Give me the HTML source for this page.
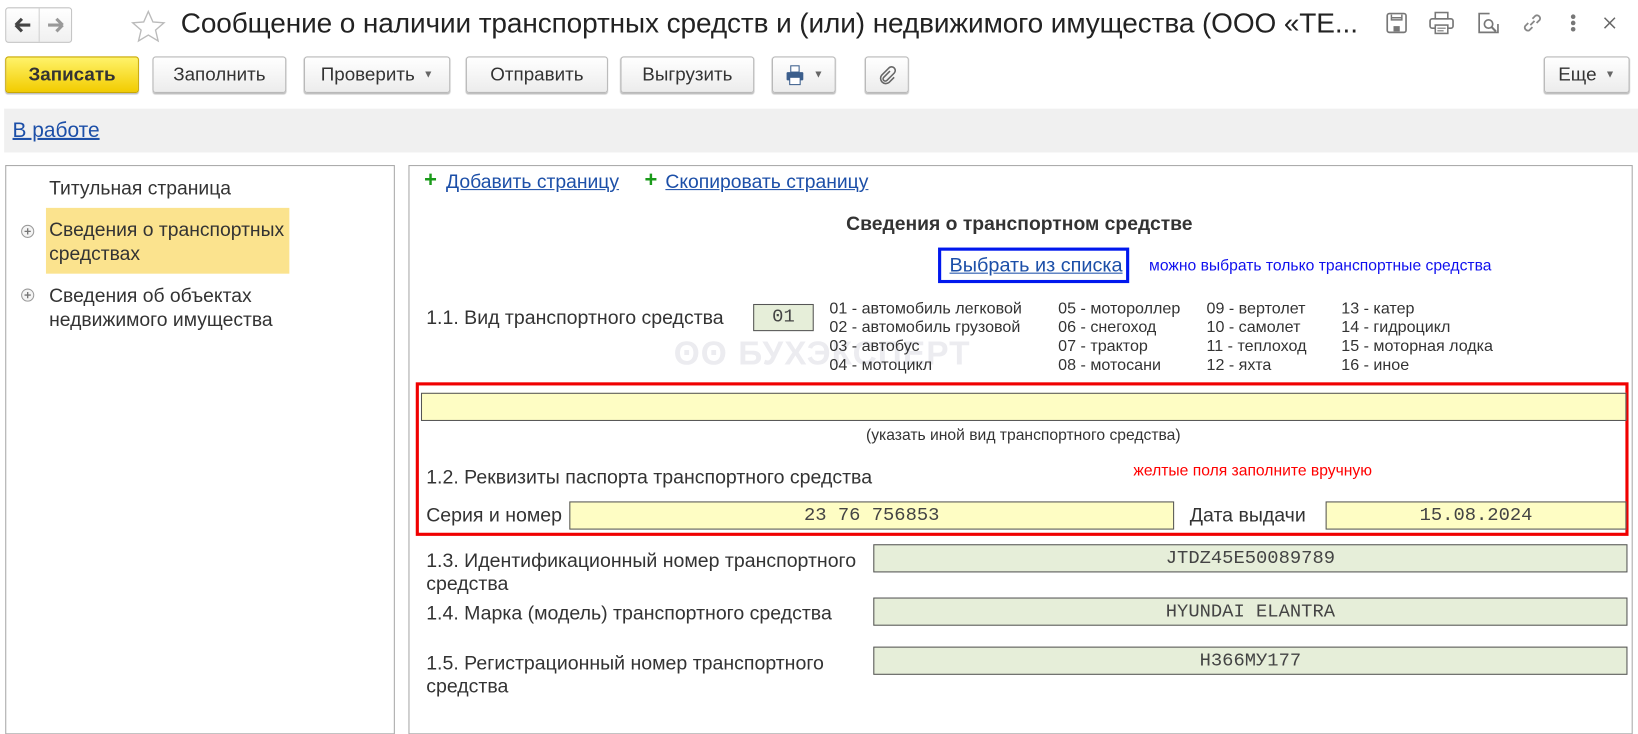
<!DOCTYPE html>
<html><head><meta charset="utf-8"><style>
*{margin:0;padding:0;box-sizing:border-box}
body{width:1638px;height:707px;background:#fff;position:relative;overflow:hidden;font-family:"Liberation Sans",Arial,sans-serif;color:#333}
#w{position:absolute;left:0;top:0;width:1568px;height:677px;transform:scale(1.0446);transform-origin:0 0}
.t{position:absolute;white-space:nowrap;line-height:1}
.btn{position:absolute;top:54px;height:35px;border:1px solid #b9b9b9;border-radius:3px;background:linear-gradient(#fff,#ececec);box-shadow:0 1px 1px rgba(0,0,0,.25);font-size:18px;color:#333;display:flex;align-items:center;justify-content:center}
.fld{position:absolute;border:1px solid #555;background:#e6eed9;font-family:"Liberation Mono",monospace;font-size:18px;color:#444;display:flex;align-items:center;justify-content:center}
.y{background:#fefdc4}
.lnk{color:#1c4fa8;text-decoration:underline}
.lst{position:absolute;font-size:15.4px;line-height:18px;color:#333;white-space:nowrap}
.arr{font-size:10px;color:#666;margin-left:8px}
.b{font-size:18.7px}
</style></head><body><div id="w">
<div style="position:absolute;left:5px;top:7px;width:64px;height:34px;border:1px solid #c4c4c4;border-radius:3px;background:linear-gradient(#fff,#f0f0f0)"></div>
<div style="position:absolute;left:37px;top:8px;width:1px;height:32px;background:#d0d0d0"></div>
<svg style="position:absolute;left:12px;top:14px" width="20" height="20" viewBox="0 0 20 20"><path d="M3 10h14M3 10l6-6M3 10l6 6" stroke="#444" stroke-width="3" fill="none"/></svg>
<svg style="position:absolute;left:43px;top:14px" width="20" height="20" viewBox="0 0 20 20"><path d="M3 10h14M17 10l-6-6M17 10l-6 6" stroke="#999" stroke-width="3" fill="none"/></svg>
<svg style="position:absolute;left:125px;top:9px" width="34" height="32" viewBox="0 0 34 32"><path d="M17 2l4.4 10 10.6.8-8.1 7 2.5 10.4L17 24.6 7.6 30.2l2.5-10.4-8.1-7 10.6-.8z" fill="none" stroke="#bbb" stroke-width="1.3"/></svg>
<div class="t" style="left:173px;top:9px;font-size:26.8px;color:#222;letter-spacing:-0.1px">Сообщение о наличии транспортных средств и (или) недвижимого имущества (ООО «ТЕ...</div>
<svg style="position:absolute;left:1325px;top:10px" width="24" height="24" viewBox="0 0 24 24"><rect x="3" y="3" width="18" height="18" rx="2" fill="none" stroke="#777" stroke-width="1.6"/><path d="M7 4v5h10V4M7 7h10" stroke="#777" stroke-width="1.4" fill="none"/><rect x="9" y="15" width="6" height="5" fill="#777"/></svg>
<svg style="position:absolute;left:1367px;top:10px" width="26" height="24" viewBox="0 0 26 24"><rect x="7" y="2" width="12" height="6" fill="none" stroke="#777" stroke-width="1.5"/><rect x="2" y="8" width="22" height="9" rx="2" fill="none" stroke="#777" stroke-width="1.6"/><rect x="7" y="14" width="12" height="8" fill="#fff" stroke="#777" stroke-width="1.5"/><path d="M9 17h8M9 19.5h6" stroke="#777"/></svg>
<svg style="position:absolute;left:1413px;top:10px" width="24" height="24" viewBox="0 0 24 24"><path d="M13 3H3v18h18v-8" fill="none" stroke="#777" stroke-width="1.6"/><circle cx="12" cy="13" r="4" fill="none" stroke="#777" stroke-width="1.6"/><path d="M15 16l4 4" stroke="#777" stroke-width="2"/></svg>
<svg style="position:absolute;left:1455px;top:10px" width="24" height="24" viewBox="0 0 24 24"><path d="M10 14l4-4M8 12l-3 3a3 3 0 004 4l3-3M16 12l3-3a3 3 0 00-4-4l-3 3" fill="none" stroke="#888" stroke-width="1.7"/></svg>
<svg style="position:absolute;left:1502px;top:10px" width="8" height="24" viewBox="0 0 8 24"><circle cx="4" cy="6" r="2.2" fill="#777"/><circle cx="4" cy="12" r="2.2" fill="#777"/><circle cx="4" cy="18" r="2.2" fill="#777"/></svg>
<svg style="position:absolute;left:1534px;top:15px" width="14" height="14" viewBox="0 0 14 14"><path d="M2 2l10 10M12 2L2 12" stroke="#666" stroke-width="1.4"/></svg>
<div class="btn" style="left:5px;width:128px;background:linear-gradient(#fff36a,#f2cc00);border-color:#c9a800;font-weight:bold;color:#333">Записать</div>
<div class="btn" style="left:146px;width:128px">Заполнить</div>
<div class="btn" style="left:291px;width:140px">Проверить<span class="arr">▼</span></div>
<div class="btn" style="left:446px;width:136px">Отправить</div>
<div class="btn" style="left:594px;width:128px">Выгрузить</div>
<div class="btn" style="left:739px;width:61px"><svg width="20" height="20" viewBox="0 0 20 20"><rect x="6" y="1" width="8" height="6" fill="#fff" stroke="#3b5e8c"/><rect x="2" y="7" width="16" height="8" rx="1" fill="#3b5e8c"/><rect x="5" y="12" width="10" height="7" fill="#fff" stroke="#3b5e8c"/></svg><span class="arr">▼</span></div>
<div class="btn" style="left:828px;width:42px"><svg width="18" height="20" viewBox="0 0 18 20"><path d="M12 6l-6 6a2 2 0 003 3l7-7a3.5 3.5 0 00-5-5l-7 7a5 5 0 007 7l5-5" fill="none" stroke="#666" stroke-width="1.5"/></svg></div>
<div class="btn" style="left:1478px;width:82px">Еще<span class="arr">▼</span></div>
<div style="position:absolute;left:4px;top:104px;width:1630px;height:42px;background:#f0f0f0"></div>
<div class="t lnk" style="left:12px;top:115px;font-size:20px">В работе</div>
<div style="position:absolute;left:5px;top:158px;width:373px;height:545px;border:1px solid #a8a8a8"></div>
<div class="t" style="left:47px;top:171px;font-size:18.5px">Титульная страница</div>
<div style="position:absolute;left:44px;top:199px;width:233px;height:63px;background:#fbe38e"></div>
<div class="t" style="left:47px;top:208px;font-size:18.5px;line-height:23px">Сведения о транспортных<br>средствах</div>
<div class="t" style="left:47px;top:271px;font-size:18.5px;line-height:23px">Сведения об объектах<br>недвижимого имущества</div>
<svg style="position:absolute;left:20px;top:215px" width="13" height="13" viewBox="0 0 13 13"><circle cx="6.5" cy="6.5" r="5.8" fill="#f4f4f4" stroke="#999"/><path d="M3.5 6.5h6M6.5 3.5v6" stroke="#777" stroke-width="1.3"/></svg>
<svg style="position:absolute;left:20px;top:276px" width="13" height="13" viewBox="0 0 13 13"><circle cx="6.5" cy="6.5" r="5.8" fill="#f4f4f4" stroke="#999"/><path d="M3.5 6.5h6M6.5 3.5v6" stroke="#777" stroke-width="1.3"/></svg>
<div style="position:absolute;left:391px;top:158px;width:1172px;height:545px;border:1px solid #a8a8a8"></div>
<div class="t" style="left:406px;top:162px;font-size:21px;font-weight:bold;color:#1a9a1a">+</div>
<div class="t lnk" style="left:427px;top:165px;font-size:18.5px">Добавить страницу</div>
<div class="t" style="left:617px;top:162px;font-size:21px;font-weight:bold;color:#1a9a1a">+</div>
<div class="t lnk" style="left:637px;top:165px;font-size:18.5px">Скопировать страницу</div>
<div class="t" style="left:810px;top:205px;font-size:18.5px;font-weight:bold;color:#333">Сведения о транспортном средстве</div>
<div style="position:absolute;left:898px;top:237px;width:183px;height:34px;border:3px solid #0018ee"></div>
<div class="t lnk" style="left:909px;top:245px;font-size:19px">Выбрать из списка</div>
<div class="t" style="left:1100px;top:247px;font-size:15px;color:#1010ee">можно выбрать только транспортные средства</div>
<div class="t b" style="left:408px;top:295px">1.1. Вид транспортного средства</div>
<div class="fld" style="left:721px;top:291px;width:58px;height:26px">01</div>
<div class="lst" style="left:794px;top:287px">01 - автомобиль легковой<br>02 - автомобиль грузовой<br>03 - автобус<br>04 - мотоцикл</div>
<div class="lst" style="left:1013px;top:287px">05 - мотороллер<br>06 - снегоход<br>07 - трактор<br>08 - мотосани</div>
<div class="lst" style="left:1155px;top:287px">09 - вертолет<br>10 - самолет<br>11 - теплоход<br>12 - яхта</div>
<div class="lst" style="left:1284px;top:287px">13 - катер<br>14 - гидроцикл<br>15 - моторная лодка<br>16 - иное</div>
<div class="t" style="left:645px;top:322px;font-size:32px;font-weight:bold;color:#ececf0;letter-spacing:1px;z-index:-1">ʘʘ БУХЭКСПЕРТ</div>
<div style="position:absolute;left:398px;top:366px;width:1161px;height:147px;border:3px solid #f00000"></div>
<div class="fld y" style="left:403px;top:376px;width:1154px;height:27px"></div>
<div class="t" style="left:829px;top:409px;font-size:15px">(указать иной вид транспортного средства)</div>
<div class="t b" style="left:408px;top:448px">1.2. Реквизиты паспорта транспортного средства</div>
<div class="t" style="left:1085px;top:443px;font-size:15px;color:#f00">желтые поля заполните вручную</div>
<div class="t b" style="left:408px;top:484px">Серия и номер</div>
<div class="fld y" style="left:545px;top:480px;width:579px;height:27px">23 76 756853</div>
<div class="t b" style="left:1139px;top:484px">Дата выдачи</div>
<div class="fld y" style="left:1269px;top:480px;width:288px;height:27px">15.08.2024</div>
<div class="t b" style="left:408px;top:526px;line-height:22px">1.3. Идентификационный номер транспортного<br>средства</div>
<div class="fld" style="left:836px;top:521px;width:722px;height:27px">JTDZ45E50089789</div>
<div class="t b" style="left:408px;top:578px">1.4. Марка (модель) транспортного средства</div>
<div class="fld" style="left:836px;top:572px;width:722px;height:27px">HYUNDAI ELANTRA</div>
<div class="t b" style="left:408px;top:624px;line-height:22px">1.5. Регистрационный номер транспортного<br>средства</div>
<div class="fld" style="left:836px;top:619px;width:722px;height:27px">Н366МУ177</div>
</div></body></html>
